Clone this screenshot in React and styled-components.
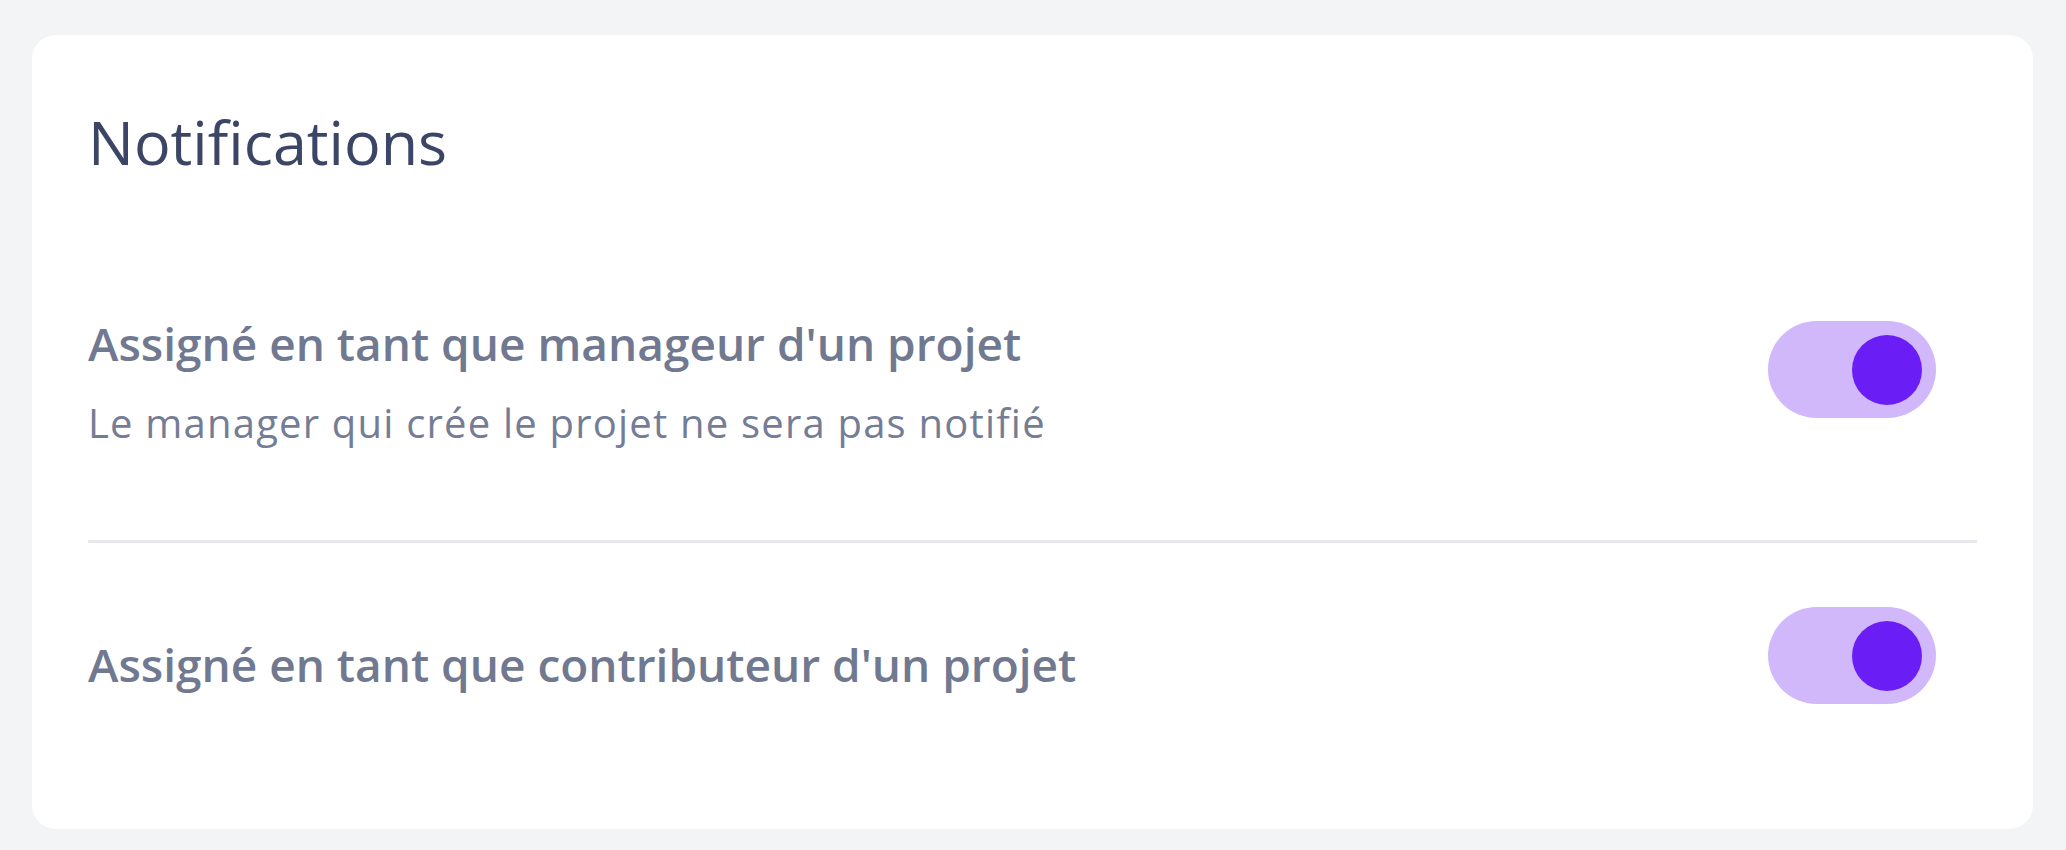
import { useState } from "react";
import styled, { createGlobalStyle } from "styled-components";

const GlobalStyle = createGlobalStyle`
  * {
    box-sizing: border-box;
  }
  html, body {
    margin: 0;
    padding: 0;
    background: #f3f4f6;
  }
  body {
    font-family: "Open Sans", "Noto Sans", sans-serif;
  }
`;

const Page = styled.div`
  min-height: 850px;
  padding: 35px 33px 22px 32px;
  background: #f3f4f6;
`;

const Card = styled.section`
  background: #ffffff;
  border-radius: 24px;
  padding: 71px 56px 37px 56px;
`;

const Title = styled.h2`
  margin: 0 0 45px 0;
  font-size: 61px;
  line-height: 72px;
  font-weight: 400;
  color: #3b4565;
`;

const Row = styled.div`
  display: flex;
  align-items: center;
  justify-content: space-between;
  padding: 84px 41px 92px 0;
  border-bottom: 3px solid #e8e9ec;
`;

const LastRow = styled(Row)`
  padding: 72px 41px 80px 0;
  border-bottom: none;
`;

const TextBlock = styled.div`
  display: flex;
  flex-direction: column;
`;

const Label = styled.span`
  font-size: 46px;
  line-height: 72px;
  font-weight: 600;
  color: #707990;
`;

const Hint = styled.span`
  margin-top: 19px;
  font-size: 40px;
  line-height: 50px;
  font-weight: 400;
  letter-spacing: 0.03em;
  color: #747d95;
`;

const Track = styled.button`
  display: flex;
  align-items: center;
  justify-content: ${(props) => (props.$on ? "flex-end" : "flex-start")};
  flex-shrink: 0;
  width: 168px;
  height: 97px;
  margin: -8px 0 8px 0;
  padding: 0 14px;
  border: none;
  border-radius: 49px;
  background: ${(props) => (props.$on ? "#d1b8fa" : "#e5e7eb")};
  cursor: pointer;
`;

const Knob = styled.span`
  display: block;
  width: 70px;
  height: 70px;
  border-radius: 50%;
  background: ${(props) => (props.$on ? "#6a1ef5" : "#ffffff")};
`;

function Toggle({ on, onChange }) {
  return (
    <Track
      type="button"
      role="switch"
      aria-checked={on}
      $on={on}
      onClick={() => onChange(!on)}
    >
      <Knob $on={on} />
    </Track>
  );
}

const settings = [
  {
    key: "manager",
    label: "Assigné en tant que manageur d'un projet",
    hint: "Le manager qui crée le projet ne sera pas notifié",
  },
  {
    key: "contributor",
    label: "Assigné en tant que contributeur d'un projet",
  },
];

function App() {
  const [values, setValues] = useState({ manager: true, contributor: true });

  return (
    <>
      <GlobalStyle />
      <Page>
        <Card>
          <Title>Notifications</Title>
          {settings.map((item, i) => {
            const RowTag = i === settings.length - 1 ? LastRow : Row;
            return (
              <RowTag key={item.key}>
                <TextBlock>
                  <Label>{item.label}</Label>
                  {item.hint && <Hint>{item.hint}</Hint>}
                </TextBlock>
                <Toggle
                  on={values[item.key]}
                  onChange={(v) => setValues({ ...values, [item.key]: v })}
                />
              </RowTag>
            );
          })}
        </Card>
      </Page>
    </>
  );
}

export default App;
